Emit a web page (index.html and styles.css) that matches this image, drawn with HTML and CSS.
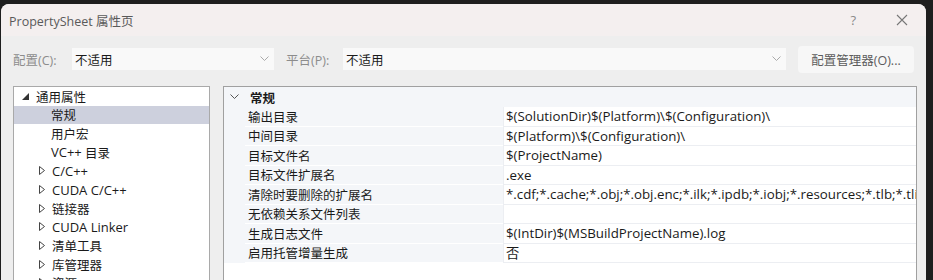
FILE: index.html
```html
<!DOCTYPE html>
<html>
  <head>
    <title>PropertySheet 属性页</title>
    <link rel="stylesheet" href="styles.css">
  </head>
  <body>
    <div class="dialog">
      <div class="titlebar">
        <span class="title">PropertySheet 属性页</span>
        <span class="help">?</span>
        <svg class="close" width="12" height="12" viewBox="0 0 12 12">
          <path d="M1 1 L11 11 M11 1 L1 11" stroke="#777" stroke-width="1.1" fill="none"/>
        </svg>
      </div>

      <div class="toolbar">
        <label class="lbl">配置(C):</label>
        <div class="combo combo-config">
          <span>不适用</span>
          <svg width="9" height="6" viewBox="0 0 9 6"><path d="M0.5 0.5 L4.5 4.5 L8.5 0.5" stroke="#aaa" fill="none"/></svg>
        </div>
        <label class="lbl lbl-platform">平台(P):</label>
        <div class="combo combo-platform">
          <span>不适用</span>
          <svg width="9" height="6" viewBox="0 0 9 6"><path d="M0.5 0.5 L4.5 4.5 L8.5 0.5" stroke="#aaa" fill="none"/></svg>
        </div>
        <button class="manager">配置管理器(O)...</button>
      </div>

      <div class="main">
        <div class="tree">
          <div class="node root">
            <svg class="exp" width="7" height="7" viewBox="0 0 7 7"><polygon points="7,0 7,7 0,7" fill="#333"/></svg>
            <span>通用属性</span>
          </div>
          <div class="node leaf selected"><span>常规</span></div>
          <div class="node leaf"><span>用户宏</span></div>
          <div class="node leaf"><span class="latin">VC++</span>&nbsp;<span class="cjk">目录</span></div>
          <div class="node branch"><svg class="col" width="6" height="9" viewBox="0 0 6 9"><polygon points="0.5,0.5 5.5,4.5 0.5,8.5" fill="none" stroke="#444"/></svg><span class="latin">C/C++</span></div>
          <div class="node branch"><svg class="col" width="6" height="9" viewBox="0 0 6 9"><polygon points="0.5,0.5 5.5,4.5 0.5,8.5" fill="none" stroke="#444"/></svg><span class="latin">CUDA C/C++</span></div>
          <div class="node branch"><svg class="col" width="6" height="9" viewBox="0 0 6 9"><polygon points="0.5,0.5 5.5,4.5 0.5,8.5" fill="none" stroke="#444"/></svg><span>链接器</span></div>
          <div class="node branch"><svg class="col" width="6" height="9" viewBox="0 0 6 9"><polygon points="0.5,0.5 5.5,4.5 0.5,8.5" fill="none" stroke="#444"/></svg><span class="latin">CUDA Linker</span></div>
          <div class="node branch"><svg class="col" width="6" height="9" viewBox="0 0 6 9"><polygon points="0.5,0.5 5.5,4.5 0.5,8.5" fill="none" stroke="#444"/></svg><span>清单工具</span></div>
          <div class="node branch"><svg class="col" width="6" height="9" viewBox="0 0 6 9"><polygon points="0.5,0.5 5.5,4.5 0.5,8.5" fill="none" stroke="#444"/></svg><span>库管理器</span></div>
          <div class="node branch"><svg class="col" width="6" height="9" viewBox="0 0 6 9"><polygon points="0.5,0.5 5.5,4.5 0.5,8.5" fill="none" stroke="#444"/></svg><span>资源</span></div>
        </div>

        <div class="grid">
          <div class="group">
            <svg class="chev" width="9" height="6" viewBox="0 0 9 6"><path d="M0.5 0.5 L4.5 4.5 L8.5 0.5" stroke="#555" fill="none"/></svg>
            <span>常规</span>
          </div>
          <div class="prop"><div class="name">输出目录</div><div class="val">$(SolutionDir)$(Platform)\$(Configuration)\</div></div>
          <div class="prop"><div class="name">中间目录</div><div class="val">$(Platform)\$(Configuration)\</div></div>
          <div class="prop"><div class="name">目标文件名</div><div class="val">$(ProjectName)</div></div>
          <div class="prop"><div class="name">目标文件扩展名</div><div class="val">.exe</div></div>
          <div class="prop"><div class="name">清除时要删除的扩展名</div><div class="val">*.cdf;*.cache;*.obj;*.obj.enc;*.ilk;*.ipdb;*.iobj;*.resources;*.tlb;*.tli;*.tlh;*.tmp;*.rsp;*.pgc;*.pgd;*.meta</div></div>
          <div class="prop"><div class="name">无依赖关系文件列表</div><div class="val"></div></div>
          <div class="prop"><div class="name">生成日志文件</div><div class="val">$(IntDir)$(MSBuildProjectName).log</div></div>
          <div class="prop"><div class="name">启用托管增量生成</div><div class="val">否</div></div>
        </div>
      </div>
    </div>
  </body>
</html>
```

FILE: styles.css
```css
* {
  box-sizing: border-box;
}
body {
  margin: 0;
  height: 280px;
  overflow: hidden;
  background: #1e1e1e;
  font-family: "Open Sans", "Noto Sans CJK SC", sans-serif;
  font-size: 12px;
  color: #1a1a1a;
}
.dialog {
  margin: 4px 0 0 1px;
  width: 925px;
  height: 290px;
  background: #eeeeee;
  border-radius: 8px 8px 0 0;
  overflow: hidden;
}
.titlebar {
  height: 32px;
  background: #f4efef;
  display: flex;
  align-items: center;
  padding-left: 8px;
}
.title {
  color: #5a5a5a;
  font-size: 12.5px;
  flex: 1;
}
.help {
  color: #8a8a8a;
  font-size: 13px;
  margin-right: 40px;
}
.close {
  margin-right: 18px;
}
.toolbar {
  height: 50px;
  display: flex;
  align-items: center;
  padding: 0 10px 4px 12px;
}
.lbl {
  color: #8c8c8c;
  width: 59px;
  font-size: 12.5px;
}
.lbl-platform {
  margin-left: 12px;
  width: 57px;
}
.combo {
  height: 22px;
  background: #f9f9f9;
  display: flex;
  align-items: center;
  justify-content: space-between;
  padding: 0 5px 0 3px;
  font-size: 12.5px;
}
.combo-config {
  width: 202px;
}
.combo-platform {
  width: 443px;
}
.manager {
  margin-left: 12px;
  width: 116px;
  height: 27px;
  border: none;
  border-radius: 4px;
  background: #f7f7f7;
  color: #5c5c5c;
  font-family: inherit;
  font-size: 12.5px;
  padding: 0;
}
.main {
  display: flex;
  gap: 13px;
  padding-left: 12px;
}
.tree {
  width: 197px;
  height: 210px;
  background: #ffffff;
  border: 1px solid #a9a9a9;
}
.node {
  height: 18.67px;
  display: flex;
  align-items: center;
  font-size: 12.5px;
  white-space: nowrap;
}
.node .latin {
  font-size: 13px;
}
.root .exp {
  margin-left: 8px;
  margin-right: 7px;
  margin-top: 1px;
}
.leaf span:first-child {
  margin-left: 37px;
}
.branch .col {
  margin-left: 25px;
  margin-right: 7px;
}
.selected {
  background: #cdd0dd;
}
.grid {
  width: 694px;
  height: 210px;
  background: #ffffff;
  border: 1px solid #a0a0a0;
}
.group {
  height: 20px;
  background: #f4f6f9;
  display: flex;
  align-items: center;
  font-weight: bold;
  font-size: 12.5px;
}
.chev {
  margin-left: 6px;
  margin-right: 11px;
}
.prop {
  height: 19.5px;
  display: flex;
  background: #f4f6f9;
  padding-left: 21px;
}
.prop .name {
  width: 258px;
  padding-left: 3px;
  border-bottom: 1px solid #ffffff;
  display: flex;
  align-items: center;
  font-size: 12.5px;
}
.prop .val {
  flex: 1;
  background: #ffffff;
  border-left: 1px solid #eceef2;
  border-bottom: 1px solid #eceef2;
  padding-left: 2px;
  display: flex;
  align-items: center;
  white-space: nowrap;
  overflow: hidden;
  font-size: 13.3px;
}
```
